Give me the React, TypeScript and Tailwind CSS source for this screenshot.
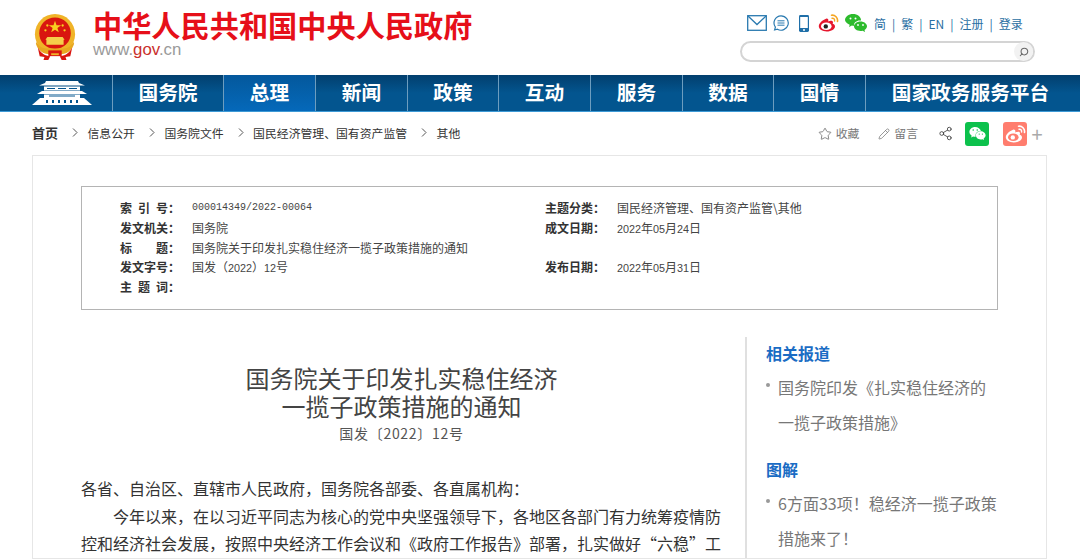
import { FaWeixin } from "react-icons/fa";
import { LuSearch, LuStar, LuPencil, LuShare2 } from "react-icons/lu";

const cjk = "font-['Noto_Sans_CJK_SC','Liberation_Sans',sans-serif]";

const navItems = [
  { label: "国务院", w: "w-[111px]" },
  { label: "总理", w: "w-[92px]", active: true },
  { label: "新闻", w: "w-[92px]" },
  { label: "政策", w: "w-[91px]" },
  { label: "互动", w: "w-[92px]" },
  { label: "服务", w: "w-[92px]" },
  { label: "数据", w: "w-[91px]" },
  { label: "国情", w: "w-[92px]" },
  { label: "国家政务服务平台", w: "flex-1 pr-[5px]" },
];

const crumbs = ["信息公开", "国务院文件", "国民经济管理、国有资产监管", "其他"];

function Emblem() {
  return (
    <svg width="44" height="46" viewBox="0 0 46 48">
      <circle cx="23" cy="21" r="21" fill="#f0b428" />
      <circle cx="23" cy="20" r="16.5" fill="#d9160f" />
      <polygon points="23,7 24.6,11.6 29.4,11.6 25.500,14.500 27,19 23,16.300 19,19 20.500,14.500 16.600,11.600 21.400,11.600" fill="#f8d020" />
      <circle cx="15" cy="12" r="1.2" fill="#f8d020" />
      <circle cx="13" cy="17" r="1.2" fill="#f8d020" />
      <circle cx="31" cy="12" r="1.2" fill="#f8d020" />
      <circle cx="33" cy="17" r="1.2" fill="#f8d020" />
      <path d="M15 24h16l2 3H13zM14 27h18v5H14z" fill="#f5cf4a" />
      <path d="M3 31c2 7 8 11 14 11h12c6 0 12-4 14-11l-1-2c-2 5-6 7-10 7H14c-4 0-8-2-10-7z" fill="#e8a820" />
      <path d="M5 35c3 6 8 9 13 9l-2 4H11l1-3-5-1zM41 35c-3 6-8 9-13 9l2 4h5l-1-3 5-1z" fill="#d9160f" />
      <path d="M16 38h14v6H16z" fill="#d9160f" />
      <path d="M19 41h8v2h-8z" fill="#f0b428" />
    </svg>
  );
}

function Tiananmen() {
  return (
    <svg width="60" height="25" viewBox="0 0 60 25" fill="#fff">
      <path d="M14 0h32l1 2 6 2.500H7L13 2z" />
      <path d="M12 5.500h36v4H12z" />
      <path d="M15 7h8v1h-8zM26 7h8v1h-8zM37 7h8v1h-8z" fill="#03558f" />
      <path d="M10 10h40l5 3H5z" />
      <path d="M12 13.500h36v3.500H12z" />
      <path d="M8 17h44l8 7H0z" />
      <path d="M17 14.500h26v1H17z" fill="#03558f" />
      <path d="M14 19h2v3h-2zM20 19h2v3h-2zM26 19h2v3h-2zM32 19h2v3h-2zM38 19h2v3h-2zM44 19h2v3h-2z" fill="#03558f" />
    </svg>
  );
}

function Weibo({ mono }: { mono?: boolean }) {
  const body = mono ? "#fff" : "#e6162d";
  const inner = mono ? "#ff7d6e" : "#fff";
  const eye = mono ? "#fff" : "#222";
  const arc = mono ? "#fff" : "#f5a623";
  return (
    <svg width="21" height="18" viewBox="0 0 21 18" fill="none">
      <path d="M8.500 4.500C4.500 6 .8 9.400.8 12.200c0 3 3.600 5.200 7.900 5.200 4.800 0 8.300-2.600 8.300-5 0-1.600-1.400-2.300-2.400-2.600.6-1.200.6-2.500-.4-2.900-1.200-.5-3 .2-4 .6.5-1.800-.1-3.100-1.700-3z" fill={body} />
      <ellipse cx="8.300" cy="12.200" rx="5.300" ry="3.800" fill={inner} />
      <circle cx="7.800" cy="12.400" r="2.200" fill={eye} />
      <path d="M13.500 1.200c3.500-.5 6.600 2.500 6 6.200" stroke={arc} strokeWidth="1.600" strokeLinecap="round" />
      <path d="M14 4.200c1.600-.2 2.900 1 2.600 2.800" stroke={arc} strokeWidth="1.400" strokeLinecap="round" />
    </svg>
  );
}

function TopIcons() {
  return (
    <div className="flex items-center h-[20px]">
      <svg width="20" height="16" viewBox="0 0 20 16" fill="none" stroke="#2a7ab0" strokeWidth="1.3">
        <rect x=".7" y=".7" width="18.600" height="14.600" fill="#fff" />
        <path d="M1 1l9 8.500L19 1" />
      </svg>
      <svg className="ml-[6px]" width="16" height="16" viewBox="0 0 16 16" fill="none" stroke="#2a7ab0" strokeWidth="1.2">
        <path d="M8 .8a7.200 7.200 0 1 1-3.600 13.400L1.600 15l.8-2.800A7.200 7.200 0 0 1 8 .8z" />
        <path d="M4.500 5.800h7M4.500 8h7M4.500 10.200h7" strokeWidth="1" />
      </svg>
      <svg className="ml-[10px]" width="10" height="17" viewBox="0 0 10 17">
        <rect x="0" y="0" width="10" height="17" rx="1.400" fill="#1f6fa8" />
        <rect x="1.200" y="2" width="7.600" height="11" fill="#fff" />
        <circle cx="5" cy="15" r="1" fill="#fff" />
      </svg>
      <span className="ml-[9px] flex"><Weibo /></span>
      <svg className="ml-[6px]" width="22" height="18" viewBox="0 0 22 18" fill="#2dbb2d">
        <path d="M8 0c4.400 0 8 2.700 8 6 0 .2 0 .4-.1.6-3.700-.6-7.300 1.800-7 5.300-.8 0-1.300-.1-2-.3L4 13l.7-2.300C2 9.500 0 7.900 0 6c0-3.300 3.600-6 8-6z" />
        <path d="M15.500 7.500c3.600 0 6.500 2.200 6.500 4.800 0 1.500-1 2.800-2.500 3.700l.5 2-2.400-1.300c-.7.200-1.400.3-2.100.3-3.600 0-6.500-2.100-6.500-4.700s2.900-4.800 6.500-4.800z" />
        <circle cx="5.500" cy="4.500" r="1" fill="#fff" />
        <circle cx="10.500" cy="4.500" r="1" fill="#fff" />
        <circle cx="13" cy="11" r=".9" fill="#fff" />
        <circle cx="18" cy="11" r=".9" fill="#fff" />
      </svg>
    </div>
  );
}

function MetaLabel({ text }: { text: string }) {
  return (
    <span className="flex w-[72px] shrink-0 font-bold text-[#333]">
      <span className="flex w-[48px] justify-between">
        {text.split("").map((c, i) => (
          <span key={i}>{c}</span>
        ))}
      </span>
      <span className="w-[12px]">：</span>
    </span>
  );
}

const numCls = "font-['Liberation_Mono',monospace] text-[10px]";
const digit = "font-['Liberation_Sans',sans-serif] text-[10.8px]";

function MetaDate({ y, m, d }: { y: string; m: string; d: string }) {
  return (
    <span>
      <span className={digit}>{y}</span>年<span className={digit}>{m}</span>月<span className={digit}>{d}</span>日
    </span>
  );
}

export default function App() {
  return (
    <div className={`${cjk} w-[1080px] h-[559px] overflow-hidden bg-white text-[#333]`}>
      {/* header */}
      <header className="h-[75px] flex justify-between">
        <div className="flex pl-[33px] pt-[14px]">
          <Emblem />
          <div className="ml-[16px] -mt-[5px]">
            <div className="text-[29.2px] leading-[30px] font-bold text-[#e60f19] whitespace-nowrap">中华人民共和国中央人民政府</div>
            <div className="text-[16.8px] leading-[18px] mt-[2px] text-[#9a9a9a] font-['Liberation_Sans',sans-serif]">
              www.<span className="text-[#c9302c]">gov</span>.cn
            </div>
          </div>
        </div>
        <div className="w-[340px] pt-[13px]">
          <div className="flex items-center pl-[7px]">
            <TopIcons />
            <div className="ml-[7px] mt-[1px] flex items-center text-[12px] text-[#2a6fa3] gap-[6px]">
              <span>简</span><span>|</span>
              <span>繁</span><span>|</span>
              <span>EN</span><span>|</span>
              <span>注册</span><span>|</span>
              <span>登录</span>
            </div>
          </div>
          <div className="mt-[8px] w-[295px] h-[21px] rounded-full border-2 border-[#d4d4d4] flex items-center justify-end">
            <div className="w-[19px] h-[19px] rounded-full bg-[#f2f2f2] flex items-center justify-center">
              <LuSearch size={10} className="text-[#666] -scale-x-100" strokeWidth={2.5} />
            </div>
          </div>
        </div>
      </header>

      {/* nav */}
      <nav className="h-[37px] flex bg-gradient-to-b from-[#023f6e] via-[#03558f] to-[#03558f] border-b border-[#3d9ad6]">
        <div className="w-[112px] flex items-center justify-center pl-[12px]">
          <Tiananmen />
        </div>
        {navItems.map((n) => (
          <div
            key={n.label}
            className={`${n.w} border-l border-[#6d9dbf] flex items-center justify-center pb-[2px] text-[19.7px] font-bold text-white ${n.active ? "bg-gradient-to-b from-[#04589c] to-[#0569ba]" : ""}`}
          >
            {n.label}
          </div>
        ))}
      </nav>

      {/* breadcrumb */}
      <div className="h-[43px] pl-[32px] pr-[36px] flex items-center justify-between text-[11.85px]">
        <div className="flex items-center pb-[2px]">
          <span className="font-bold text-[13px]">首页</span>
          {crumbs.map((c) => (
            <span key={c} className="flex items-center">
              <svg className="ml-[14px] mr-[9.500px]" width="6" height="9" viewBox="0 0 6 9" fill="none" stroke="#555" strokeWidth="1">
                <path d="M1 .5l4 4-4 4" />
              </svg>
              <span>{c}</span>
            </span>
          ))}
        </div>
        <div className="flex items-center text-[#777]">
          <LuStar size={14} strokeWidth={1.5} />
          <span className="ml-[4px] mb-[2px]">收藏</span>
          <LuPencil size={12} strokeWidth={1.5} className="ml-[19px]" />
          <span className="ml-[4px] mb-[2px]">留言</span>
          <LuShare2 size={15} strokeWidth={1.4} className="ml-[20px] text-[#444]" />
          <span className="ml-[12px] w-[24px] h-[24px] rounded-[3px] bg-[#0cc14c] flex items-center justify-center">
            <FaWeixin size={17} className="text-white" />
          </span>
          <span className="ml-[14px] w-[24px] h-[24px] rounded-[3px] bg-[#ff7d6e] flex items-center justify-center">
            <Weibo mono />
          </span>
          <span className="ml-[3px] w-[14px] text-center text-[20px] leading-none text-[#aaa]">+</span>
        </div>
      </div>

      {/* card */}
      <main className="ml-[32px] w-[1015px] border border-[#e6e6e6] px-[48px] pt-[30px]">
        <section className="w-[917px] h-[124px] border border-[#b4b4b4] pl-[38px] pt-[11px] grid grid-cols-[425px_1fr] auto-rows-[19.75px] text-[12px] leading-[19.75px] text-[#444]">
          <div className="flex"><MetaLabel text="索引号" /><span className={numCls}>000014349/2022-00064</span></div>
          <div className="flex"><MetaLabel text="主题分类" /><span>国民经济管理、国有资产监管\其他</span></div>
          <div className="flex"><MetaLabel text="发文机关" /><span>国务院</span></div>
          <div className="flex"><MetaLabel text="成文日期" /><MetaDate y="2022" m="05" d="24" /></div>
          <div className="flex"><MetaLabel text="标题" /><span>国务院关于印发扎实稳住经济一揽子政策措施的通知</span></div>
          <div />
          <div className="flex"><MetaLabel text="发文字号" /><span>国发（<span className={digit}>2022</span>）<span className={digit}>12</span>号</span></div>
          <div className="flex"><MetaLabel text="发布日期" /><MetaDate y="2022" m="05" d="31" /></div>
          <div className="flex"><MetaLabel text="主题词" /></div>
        </section>

        <div className="flex mt-[27px]">
          <article className="w-[641px] shrink-0 pt-[1px]">
            <h1 className="mt-[26px] text-center text-[24px] leading-[28px] text-[#444] font-normal">
              国务院关于印发扎实稳住经济
              <br />
              一揽子政策措施的通知
            </h1>
            <p className="mt-[3px] text-center text-[14px] leading-[20px] tracking-[0.7px] text-[#555]">国发〔2022〕12号</p>
            <div className="mt-[32px] text-[16px] leading-[27.5px] text-[#333]">
              <p>各省、自治区、直辖市人民政府，国务院各部委、各直属机构：</p>
              <p className="indent-[32px]">
                今年以来，在以习近平同志为核心的党中央坚强领导下，各地区各部门有力统筹疫情防控和经济社会发展，按照中央经济工作会议和《政府工作报告》部署，扎实做好“六稳”工
              </p>
            </div>
          </article>
          <aside className="ml-[23px] flex-1 border-l-2 border-[#e0e0e0] pl-[19px] pt-[4px] text-[16px] text-[#777]">
            <h3 className="font-bold text-[#1a6cc4] leading-[24px]">相关报道</h3>
            <div className="relative pl-[12px] mt-[5px] leading-[35px] whitespace-nowrap">
              <span className="absolute left-[0px] top-[13px] w-[4px] h-[4px] rounded-full bg-[#999]" />
              国务院印发《扎实稳住经济的
              <br />
              一揽子政策措施》
            </div>
            <h3 className="mt-[17px] font-bold text-[#1a6cc4] leading-[24px]">图解</h3>
            <div className="relative pl-[12px] mt-[5px] leading-[35px] whitespace-nowrap">
              <span className="absolute left-[0px] top-[13px] w-[4px] h-[4px] rounded-full bg-[#999]" />
              6方面33项！稳经济一揽子政策
              <br />
              措施来了！
            </div>
          </aside>
        </div>
      </main>
    </div>
  );
}
